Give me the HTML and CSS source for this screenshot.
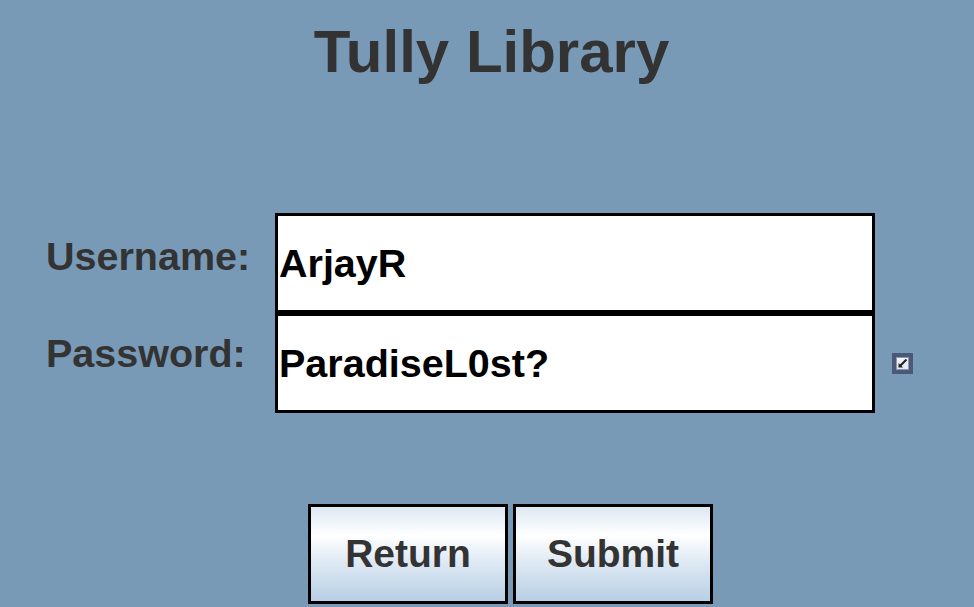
FILE: index.html
```html
<!DOCTYPE html>
<html>
<head>
<meta charset="utf-8">
<link rel="stylesheet" href="styles.css">
</head>
<body>
<div class="page">
  <h1 class="title">Tully Library</h1>
  <div class="form">
    <div class="row">
      <label class="label label-user">Username:</label>
      <div class="field">ArjayR</div>
      <div class="spacer"></div>
    </div>
    <div class="row row-pass">
      <label class="label label-pass">Password:</label>
      <div class="field">ParadiseL0st?</div>
      <div class="check">
        <div class="check-inner">
          <svg width="11" height="11" viewBox="0 0 11 11"><path d="M1.5 5 L1.5 9.5 L6 9.5 Z" fill="#222"/><path d="M3 8 L9.5 1.5" stroke="#222" stroke-width="2.2" fill="none"/></svg>
        </div>
      </div>
    </div>
  </div>
  <div class="buttons">
    <button class="btn">Return</button>
    <button class="btn">Submit</button>
  </div>
</div>
</body>
</html>
```
FILE: styles.css
```css
html, body {
  margin: 0;
  padding: 0;
}
body {
  background: #789ab7;
  width: 974px;
  height: 607px;
  overflow: hidden;
  font-family: "Liberation Sans", Arial, sans-serif;
}
.page {
  display: flex;
  flex-direction: column;
  padding-top: 22px;
}
.title {
  margin: 0;
  font-size: 60px;
  line-height: 60px;
  font-weight: bold;
  color: #333333;
  text-align: center;
  padding-left: 9px;
}
.form {
  margin-top: 131px;
  display: flex;
  flex-direction: column;
  padding-left: 46px;
}
.row {
  display: flex;
  align-items: flex-start;
  height: 100px;
}
.label {
  width: 229px;
  font-size: 39.5px;
  line-height: 39px;
  font-weight: bold;
  color: #333333;
}
.label-user { margin-top: 24px; }
.label-pass { margin-top: 21px; }
.field {
  box-sizing: border-box;
  width: 600px;
  height: 100px;
  border: 3px solid #000;
  background: #fff;
  font-size: 39.5px;
  font-weight: bold;
  color: #000;
  display: flex;
  align-items: center;
  padding-left: 1px;
  padding-top: 1px;
}
.check {
  align-self: center;
  margin-left: 17px;
  margin-top: 1px;
  box-sizing: border-box;
  width: 21px;
  height: 21px;
  background: #4b5878;
  display: flex;
  align-items: center;
  justify-content: center;
}
.check-inner {
  box-sizing: border-box;
  width: 13px;
  height: 13px;
  border: 1px solid #8c98ac;
  background: linear-gradient(#f2f5fa, #dfe7f1);
  display: flex;
  align-items: center;
  justify-content: center;
}
.check-inner svg {
  display: block;
}
.buttons {
  margin-top: 91px;
  display: flex;
  gap: 5px;
  padding-left: 308px;
}
.btn {
  box-sizing: border-box;
  width: 200px;
  height: 100px;
  border: 3px solid #000;
  border-radius: 0;
  padding: 0;
  margin: 0;
  font-family: "Liberation Sans", Arial, sans-serif;
  font-size: 39px;
  font-weight: bold;
  color: #333333;
  background: linear-gradient(to bottom, #dde8f3 0%, #ffffff 30%, #dde8f3 60%, #b8cfe5 100%);
}
```
